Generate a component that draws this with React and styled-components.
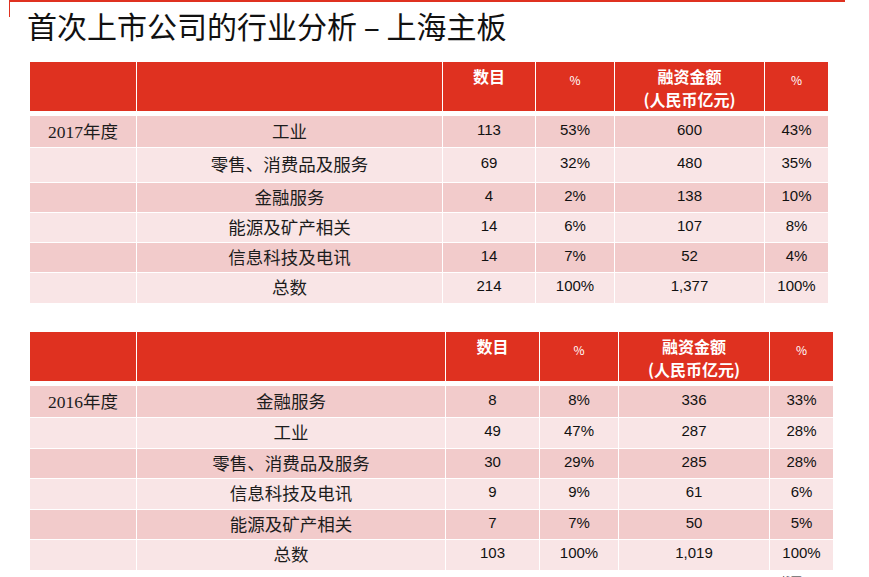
import React from 'react'
import styled, { createGlobalStyle } from 'styled-components'

const GlobalStyle = createGlobalStyle`
  html, body {
    margin: 0;
    padding: 0;
    background: #ffffff;
    overflow: hidden;
  }
  body {
    font-family: "Liberation Sans", "Noto Sans CJK SC", sans-serif;
  }
`

const RED = '#df3120'
const DARK = '#f2cbcb'
const LIGHT = '#f9e5e6'

const tables = [
  {
    cols: '106px 305px 92px 78px 149px 63px',
    rows: [
      { h: 31, year: '2017年度', name: '工业', n: '113', p: '53%', amt: '600', ap: '43%' },
      { h: 34, name: '零售、消费品及服务', n: '69', p: '32%', amt: '480', ap: '35%' },
      { h: 29, name: '金融服务', n: '4', p: '2%', amt: '138', ap: '10%' },
      { h: 29, name: '能源及矿产相关', n: '14', p: '6%', amt: '107', ap: '8%' },
      { h: 29, name: '信息科技及电讯', n: '14', p: '7%', amt: '52', ap: '4%' },
      { h: 30, name: '总数', n: '214', p: '100%', amt: '1,377', ap: '100%' },
    ],
  },
  {
    cols: '106px 308px 93px 78px 150px 63px',
    rows: [
      { h: 31, year: '2016年度', name: '金融服务', n: '8', p: '8%', amt: '336', ap: '33%' },
      { h: 30, name: '工业', n: '49', p: '47%', amt: '287', ap: '28%' },
      { h: 29, name: '零售、消费品及服务', n: '30', p: '29%', amt: '285', ap: '28%' },
      { h: 30, name: '信息科技及电讯', n: '9', p: '9%', amt: '61', ap: '6%' },
      { h: 29, name: '能源及矿产相关', n: '7', p: '7%', amt: '50', ap: '5%' },
      { h: 30, name: '总数', n: '103', p: '100%', amt: '1,019', ap: '100%' },
    ],
  },
]

const App = () => {
  return (
    <Page>
      <GlobalStyle />
      <TitleBar>
        <h1>首次上市公司的行业分析 – 上海主板</h1>
      </TitleBar>

      {tables.map((t, ti) => (
        <Table key={ti}>
          <Row $cols={t.cols} $h={49} $head>
            <HeadCell />
            <HeadCell />
            <HeadCell>数目</HeadCell>
            <HeadCell $small>%</HeadCell>
            <HeadCell>
              <span>融资金额</span>
              <span>(人民币亿元)</span>
            </HeadCell>
            <HeadCell $small>%</HeadCell>
          </Row>
          {t.rows.map((r, i) => (
            <Row key={i} $cols={t.cols} $h={r.h} $tone={i % 2 === 0 ? DARK : LIGHT}>
              <Label>{r.year || ''}</Label>
              <Label>{r.name}</Label>
              <Num>{r.n}</Num>
              <Num>{r.p}</Num>
              <Num>{r.amt}</Num>
              <Num>{r.ap}</Num>
            </Row>
          ))}
        </Table>
      ))}

      <Note>截至 2016</Note>
    </Page>
  )
}

const Page = styled.div`
  width: 869px;
  height: 577px;
  overflow: hidden;
  padding-left: 30px;
  box-sizing: border-box;
`

const TitleBar = styled.div`
  position: relative;
  height: 62px;

  &::before {
    content: '';
    position: absolute;
    left: -21px;
    top: 0;
    width: 835px;
    height: 15px;
    border-top: 2px solid ${RED};
    border-left: 1px solid ${RED};
  }

  h1 {
    margin: 0;
    padding-top: 8px;
    margin-left: -3px;
    font-family: "Noto Sans CJK SC", sans-serif;
    font-weight: 400;
    font-size: 30px;
    line-height: 34px;
    color: #111;
  }
`

const Table = styled.div`
  display: flex;
  flex-direction: column;
  gap: 1px;
  margin-bottom: 29px;
`

const Row = styled.div`
  display: grid;
  grid-template-columns: ${(p) => p.$cols};
  column-gap: 1px;
  height: ${(p) => p.$h}px;
  margin-bottom: ${(p) => (p.$head ? '4px' : '0')};

  & > div {
    background: ${(p) => (p.$head ? RED : p.$tone)};
  }
`

const HeadCell = styled.div`
  display: flex;
  flex-direction: column;
  align-items: center;
  color: #ffffff;
  text-align: center;
  font-family: "Noto Sans CJK SC", sans-serif;
  font-weight: ${(p) => (p.$small ? 400 : 700)};
  font-size: ${(p) => (p.$small ? '12px' : '16px')};
  line-height: ${(p) => (p.$small ? '20px' : '23px')};
  padding-top: ${(p) => (p.$small ? '8px' : '3px')};
  box-sizing: border-box;
`

const Label = styled.div`
  display: flex;
  justify-content: center;
  align-items: center;
  padding-bottom: 3px;
  box-sizing: border-box;
  font-family: "Liberation Serif", "Noto Sans CJK SC", serif;
  font-size: 17.5px;
  color: #1c1c1c;
`

const Num = styled.div`
  display: flex;
  justify-content: center;
  align-items: center;
  padding-bottom: 5px;
  box-sizing: border-box;
  font-family: "Liberation Sans", sans-serif;
  font-size: 15px;
  color: #111;
`

const Note = styled.div`
  margin-top: -25px;
  width: 800px;
  text-align: right;
  font-family: "Liberation Sans", sans-serif;
  font-size: 11px;
  color: #222;
`

export default App
